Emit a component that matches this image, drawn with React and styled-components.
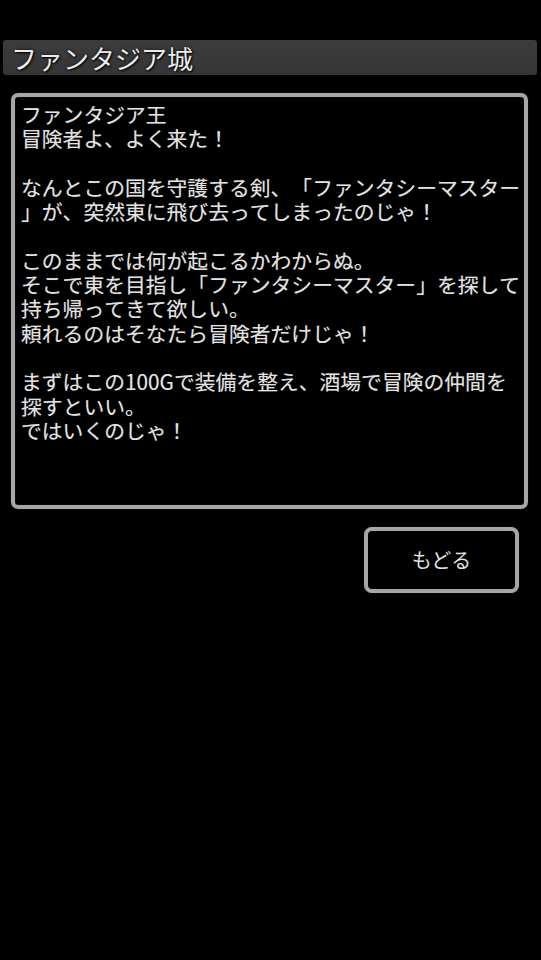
import React from 'react';
import styled, { createGlobalStyle } from 'styled-components';

const GlobalStyle = createGlobalStyle`
  html, body {
    margin: 0;
    padding: 0;
    background: #000;
  }
  body {
    font-family: "Noto Sans CJK JP", "Noto Sans", sans-serif;
    text-spacing-trim: space-all;
    font-kerning: none;
  }
`;

const Screen = styled.div`
  width: 541px;
  height: 960px;
  background: #000;
  padding-top: 40px;
  box-sizing: border-box;
  display: flex;
  flex-direction: column;
`;

const TitleBar = styled.div`
  margin: 0 4px 0 3px;
  height: 35px;
  border-radius: 3px;
  background: linear-gradient(#3c3c3c, #353535);
  display: flex;
  align-items: center;
  padding-left: 8px;
  span {
    font-size: 26px;
    line-height: 1;
    color: #ececec;
    text-shadow: 1px 1px 2px #000, 0 0 3px #111;
  }
`;

const MessagePanel = styled.div`
  margin: 18px 13px 0 11px;
  height: 416px;
  box-sizing: border-box;
  border: 4px solid #a6a6a6;
  border-radius: 7px;
  box-shadow: 0 0 1px #666, inset 0 0 1px #555;
  padding: 5px 6px;
  overflow: hidden;
`;

const MessageLine = styled.div`
  font-size: 20.8px;
  line-height: 24.3px;
  height: 24.3px;
  color: #e2e2e2;
  white-space: nowrap;
  text-spacing-trim: space-all;
  text-shadow: 0 0 1px rgba(255, 255, 255, 0.3);
`;

const ButtonRow = styled.div`
  display: flex;
  justify-content: flex-end;
  margin: 18px 22px 0 0;
`;

const BackButton = styled.button`
  width: 155px;
  height: 66px;
  box-sizing: border-box;
  background: #000;
  border: 4px solid #a6a6a6;
  border-radius: 8px;
  box-shadow: 0 0 1px #666;
  color: #e2e2e2;
  font-family: "Noto Sans CJK JP", "Noto Sans", sans-serif;
  font-size: 20px;
  padding: 0 0 2px;
  cursor: pointer;
`;

const lines = [
  'ファンタジア王',
  '冒険者よ、よく来た！',
  '',
  'なんとこの国を守護する剣、「ファンタシーマスター',
  '」が、突然東に飛び去ってしまったのじゃ！',
  '',
  'このままでは何が起こるかわからぬ。',
  'そこで東を目指し「ファンタシーマスター」を探して',
  '持ち帰ってきて欲しい。',
  '頼れるのはそなたら冒険者だけじゃ！',
  '',
  'まずはこの100Gで装備を整え、酒場で冒険の仲間を',
  '探すといい。',
  'ではいくのじゃ！',
];

const App = () => {
  return (
    <Screen>
      <GlobalStyle />
      <TitleBar>
        <span>ファンタジア城</span>
      </TitleBar>
      <MessagePanel>
        {lines.map((text, i) => (
          <MessageLine key={i}>{text}</MessageLine>
        ))}
      </MessagePanel>
      <ButtonRow>
        <BackButton>もどる</BackButton>
      </ButtonRow>
    </Screen>
  );
};

export default App;
